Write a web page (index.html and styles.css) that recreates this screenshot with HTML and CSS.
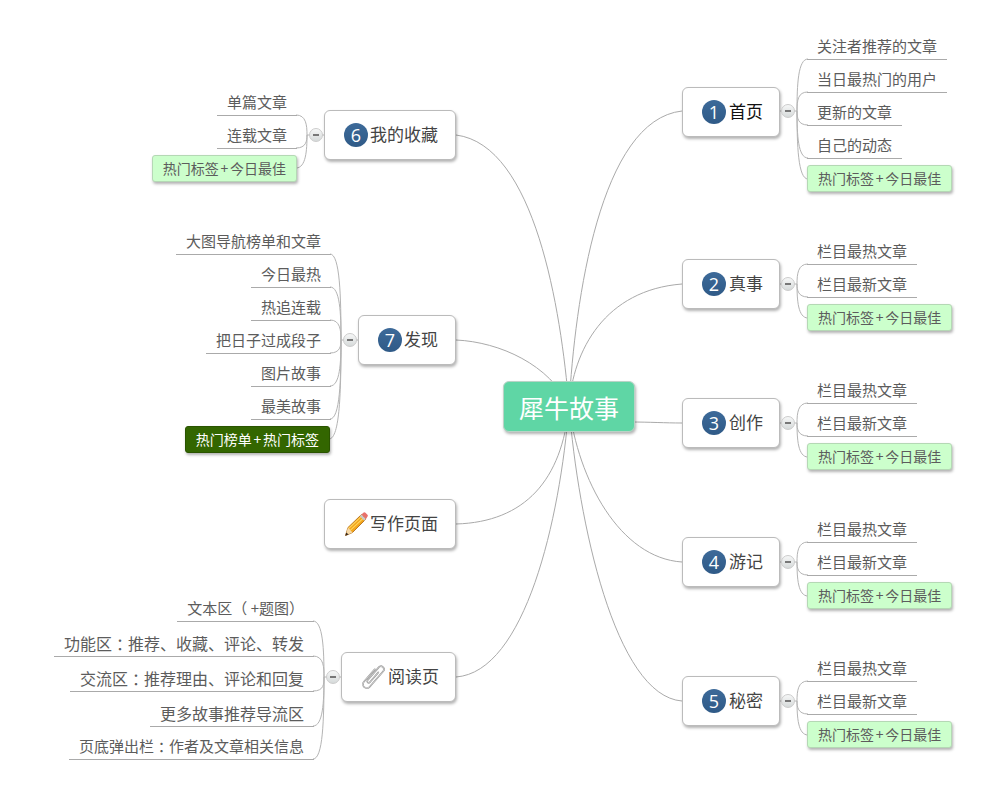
FILE: index.html
```html
<!DOCTYPE html>
<html lang="zh-CN">
<head>
<meta charset="utf-8">
<title>犀牛故事</title>
<link rel="stylesheet" href="styles.css">
</head>
<body>
<main class="map">
  <svg class="links" width="1006" height="793" viewBox="0 0 1006 793" fill="none">
    <g class="trunk">
      <path d="M569 406C575 300 600 120 682 111"/>
      <path d="M569 406C573 350 605 290 682 284"/>
      <path d="M630 422C650 422 665 423 682 423"/>
      <path d="M569 406C578 480 620 558 682 562"/>
      <path d="M569 406C578 520 615 696 682 701"/>
      <path d="M569 406C561 310 535 145 456 135"/>
      <path d="M569 406C550 365 500 342 456 340"/>
      <path d="M569 406C562 480 525 522 456 524"/>
      <path d="M569 406C560 520 525 672 456 677"/>
    </g>
    <g class="twig">
      <path d="M780 111H797C797 85 798 59 808 59"/>
      <path d="M797 111C797 100 798 92 808 92"/>
      <path d="M797 111C797 118 798 125 808 125"/>
      <path d="M797 111C797 135 798 158 808 158"/>
      <path d="M797 111C797 145 798 179 808 179"/>
      <path d="M780 284H797C797 274 798 264 808 264"/>
      <path d="M797 284C797 290 798 297 808 297"/>
      <path d="M797 284C797 300 798 318 808 318"/>
      <path d="M780 423H797C797 413 798 403 808 403"/>
      <path d="M797 423C797 429 798 436 808 436"/>
      <path d="M797 423C797 439 798 457 808 457"/>
      <path d="M780 562H797C797 552 798 542 808 542"/>
      <path d="M797 562C797 568 798 575 808 575"/>
      <path d="M797 562C797 578 798 596 808 596"/>
      <path d="M780 701H797C797 691 798 681 808 681"/>
      <path d="M797 701C797 707 798 714 808 714"/>
      <path d="M797 701C797 717 798 735 808 735"/>
      <path d="M324 135H307C307 125 306 115 296 115"/>
      <path d="M307 135C307 141 306 148 296 148"/>
      <path d="M307 135C307 150 306 168 296 168"/>
      <path d="M358 340H341C341 297 340 254 330 254"/>
      <path d="M341 340C341 313 340 287 330 287"/>
      <path d="M341 340C341 330 340 320 330 320"/>
      <path d="M341 340C341 346 340 353 330 353"/>
      <path d="M341 340C341 363 340 386 330 386"/>
      <path d="M341 340C341 380 340 419 330 419"/>
      <path d="M341 340C341 390 340 439 329 439"/>
      <path d="M341 677H324C324 650 323 621 313 621"/>
      <path d="M324 677C324 668 324 656 313 656"/>
      <path d="M324 677C324 684 324 691 313 691"/>
      <path d="M324 677C324 702 323 726 313 726"/>
      <path d="M324 677C324 720 323 759 313 759"/>
    </g>
  </svg>

  <div class="root">犀牛故事</div>

  <div class="node node-home"><span class="num">1</span><span class="label label-strong">首页</span></div>
  <span class="dot dot-home"></span>
  <div class="branch branch-right b-home">
    <div class="leaf">关注者推荐的文章</div>
    <div class="leaf">当日最热门的用户</div>
    <div class="leaf">更新的文章</div>
    <div class="leaf">自己的动态</div>
    <div class="tag">热门标签<span class="plus">+</span>今日最佳</div>
  </div>

  <div class="node node-true"><span class="num">2</span><span class="label">真事</span></div>
  <span class="dot dot-true"></span>
  <div class="branch branch-right b-true">
    <div class="leaf">栏目最热文章</div>
    <div class="leaf">栏目最新文章</div>
    <div class="tag">热门标签<span class="plus">+</span>今日最佳</div>
  </div>

  <div class="node node-create"><span class="num">3</span><span class="label">创作</span></div>
  <span class="dot dot-create"></span>
  <div class="branch branch-right b-create">
    <div class="leaf">栏目最热文章</div>
    <div class="leaf">栏目最新文章</div>
    <div class="tag">热门标签<span class="plus">+</span>今日最佳</div>
  </div>

  <div class="node node-travel"><span class="num">4</span><span class="label">游记</span></div>
  <span class="dot dot-travel"></span>
  <div class="branch branch-right b-travel">
    <div class="leaf">栏目最热文章</div>
    <div class="leaf">栏目最新文章</div>
    <div class="tag">热门标签<span class="plus">+</span>今日最佳</div>
  </div>

  <div class="node node-secret"><span class="num">5</span><span class="label">秘密</span></div>
  <span class="dot dot-secret"></span>
  <div class="branch branch-right b-secret">
    <div class="leaf">栏目最热文章</div>
    <div class="leaf">栏目最新文章</div>
    <div class="tag">热门标签<span class="plus">+</span>今日最佳</div>
  </div>

  <div class="node node-tight node-fav"><span class="num">6</span><span class="label">我的收藏</span></div>
  <span class="dot dot-fav"></span>
  <div class="branch branch-left b-fav">
    <div class="leaf">单篇文章</div>
    <div class="leaf">连载文章</div>
    <div class="tag">热门标签<span class="plus">+</span>今日最佳</div>
  </div>

  <div class="node node-tight node-find"><span class="num">7</span><span class="label">发现</span></div>
  <span class="dot dot-find"></span>
  <div class="branch branch-left b-find">
    <div class="leaf">大图导航榜单和文章</div>
    <div class="leaf">今日最热</div>
    <div class="leaf">热追连载</div>
    <div class="leaf">把日子过成段子</div>
    <div class="leaf">图片故事</div>
    <div class="leaf">最美故事</div>
    <div class="tag tag-dark">热门榜单<span class="plus">+</span>热门标签</div>
  </div>

  <div class="node node-tight node-write">
    <svg class="icon" width="24" height="24" viewBox="0 0 24 24">
      <path d="M1.5 23.5L4 15.5 17.5 2.5 22 7 8.5 20.5Z" fill="#f2a51c" stroke="#a8620f" stroke-width=".8" stroke-linejoin="round"/>
      <path d="M4.5 16.5L18.8 3.2M6.5 18.2L20.5 5" stroke="#ffd35c" stroke-width="1.1"/>
      <path d="M1.5 23.5L4 15.5 8.5 20.5Z" fill="#f6d9a8"/>
      <path d="M1.3 23.7L2.3 20.4 4.6 22.5Z" fill="#3a2a1a"/>
      <path d="M15.8 4.2L17.5 2.5 22 7 20.3 8.7Z" fill="#c9c9c9"/>
      <path d="M17.5 2.5L19.3 .8A1.6 1.6 0 0 1 21.5 .8L23.2 2.6A1.6 1.6 0 0 1 23.2 5L22 7Z" fill="#e8716c"/>
    </svg>
    <span class="label">写作页面</span>
  </div>

  <div class="node node-read">
    <svg class="icon icon-clip" width="24" height="24" viewBox="0 0 24 24" fill="none">
      <g transform="rotate(41 12 12)">
        <path class="clip-out" d="M8.2 5V21.5A3.9 3.9 0 0 0 16 21.5V1A3 3 0 0 0 10 1V18A1.5 1.5 0 0 0 13 18V5"/>
        <path class="clip-in" d="M8.2 5V21.5A3.9 3.9 0 0 0 16 21.5V1A3 3 0 0 0 10 1V18A1.5 1.5 0 0 0 13 18V5"/>
      </g>
    </svg>
    <span class="label">阅读页</span>
  </div>
  <span class="dot dot-read"></span>
  <div class="branch branch-left b-read">
    <div class="leaf">文本区（ +题图）</div>
    <div class="leaf leaf-big">功能区<span class="colon">：</span>推荐、收藏、评论、转发</div>
    <div class="leaf leaf-big">交流区<span class="colon">：</span>推荐理由、评论和回复</div>
    <div class="leaf leaf-big">更多故事推荐导流区</div>
    <div class="leaf">页底弹出栏<span class="colon">：</span>作者及文章相关信息</div>
  </div>
</main>
</body>
</html>
```
FILE: styles.css
```css
* { box-sizing: border-box; }

html, body {
  margin: 0;
  background: #fff;
}

.map {
  position: relative;
  width: 1006px;
  height: 793px;
  overflow: hidden;
  font-family: "Noto Sans CJK SC", "Noto Sans", sans-serif;
  color: #5c5c5c;
}

.links {
  position: absolute;
  left: 0;
  top: 0;
}

.trunk path { stroke: #aaa; stroke-width: 1; }
.twig path { stroke: #b4b4b4; stroke-width: 1; }

.root {
  position: absolute;
  left: 503px;
  top: 381px;
  width: 132px;
  height: 51px;
  display: flex;
  align-items: center;
  justify-content: center;
  background: #5fd6a5;
  border: 1px solid #b9d3c6;
  border-radius: 6px;
  box-shadow: 1px 2px 3px rgba(0, 0, 0, .3);
  color: #fff;
  font-size: 25px;
}

.node {
  position: absolute;
  height: 50px;
  display: flex;
  align-items: center;
  gap: 3px;
  padding: 0 16px 0 19px;
  background: #fff;
  border: 1px solid #bbb;
  border-radius: 6px;
  box-shadow: 1px 2px 3px rgba(0, 0, 0, .3);
}

.node-tight {
  gap: 2px;
  padding-right: 17px;
}

.node-home { left: 682px; top: 87px; }
.node-true { left: 682px; top: 259px; }
.node-create { left: 682px; top: 398px; }
.node-travel { left: 682px; top: 537px; }
.node-secret { left: 682px; top: 676px; }
.node-fav { left: 324px; top: 110px; }
.node-find { left: 358px; top: 315px; }
.node-write { left: 324px; top: 499px; }
.node-read { left: 341px; top: 652px; }

.num {
  width: 24px;
  height: 24px;
  flex: none;
  display: flex;
  align-items: center;
  justify-content: center;
  border-radius: 50%;
  background: linear-gradient(#3d6a99, #2f5a87);
  color: #fff;
  font-family: "Open Sans", sans-serif;
  font-size: 18px;
  font-weight: 400;
  line-height: 1;
}

.label {
  padding-bottom: 3px;
  font-size: 17px;
  line-height: 24px;
  color: #444;
  white-space: nowrap;
}

.label-strong { color: #111; }

.icon {
  flex: none;
  display: block;
}

.icon-clip { overflow: visible; }

.clip-out { stroke: #929292; stroke-width: 1.6; stroke-linecap: round; }
.clip-in { stroke: #fafafa; stroke-width: .5; stroke-linecap: round; }

.dot {
  position: absolute;
  width: 14px;
  height: 14px;
  border-radius: 50%;
  background: linear-gradient(#f6f7f7, #d6dada);
  border: 1px solid #ccc;
}

.dot::after {
  content: "";
  position: absolute;
  left: 3px;
  top: 5px;
  width: 6px;
  height: 2px;
  background: #777;
}

.dot-home { left: 781px; top: 104px; }
.dot-true { left: 781px; top: 277px; }
.dot-create { left: 781px; top: 416px; }
.dot-travel { left: 781px; top: 555px; }
.dot-secret { left: 781px; top: 694px; }
.dot-fav { left: 309px; top: 128px; }
.dot-find { left: 343px; top: 333px; }
.dot-read { left: 326px; top: 670px; }

.branch {
  position: absolute;
  display: flex;
  flex-direction: column;
}

.branch-right { left: 807px; align-items: flex-start; }
.branch-left { align-items: flex-end; }

.b-home { top: 27px; }
.b-true { top: 232px; }
.b-create { top: 371px; }
.b-travel { top: 510px; }
.b-secret { top: 649px; }
.b-fav { top: 83px; right: 709px; }
.b-find { top: 222px; right: 675px; }
.b-read { top: 589px; right: 692px; }

.leaf {
  height: 33px;
  padding: 7px 10px 0;
  font-size: 15px;
  line-height: 24px;
  border-bottom: 1px solid #aaa;
  white-space: nowrap;
}

.leaf-big {
  height: 35px;
  padding-top: 9px;
  font-size: 16px;
}

.colon {
  display: inline-block;
  width: 1em;
  text-align: center;
  font-feature-settings: "palt";
}

.tag {
  height: 27px;
  margin-top: 6px;
  padding: 0 10px 1px;
  display: flex;
  align-items: center;
  font-size: 14px;
  white-space: nowrap;
  background: #ccffcc;
  border: 1px solid #b5d8b5;
  border-radius: 3px;
  box-shadow: 1px 2px 3px rgba(0, 0, 0, .3);
}

.plus { margin: 0 1.7px; }

.tag-dark {
  margin-right: 1px;
  background: #336600;
  border-color: #2a5400;
  color: #fff;
}
```
